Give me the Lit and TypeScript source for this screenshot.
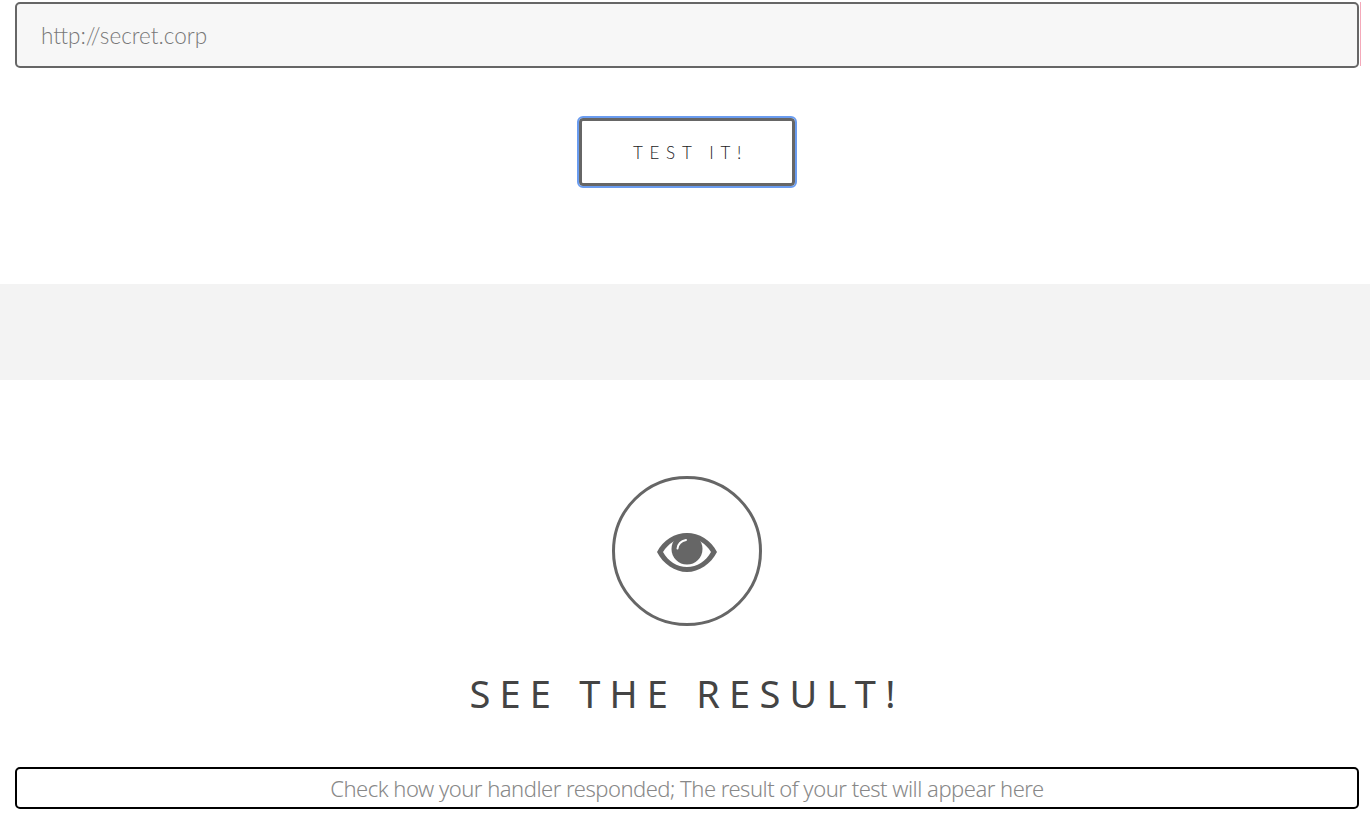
import { LitElement, html, css } from 'lit';
import { customElement } from 'lit/decorators.js';

@customElement('app-root')
class AppRoot extends LitElement {
  render() {
    return html`
      <div class="url-row">
        <input class="url" type="text" placeholder="http://secret.corp" />
        <div class="edge"></div>
      </div>

      <div class="actions">
        <button class="test">TEST IT!</button>
      </div>

      <div class="band"></div>

      <div class="result">
        <div class="circle">
          <svg width="60" height="39" viewBox="0 0 60 39">
            <path fill="#666" fill-rule="evenodd" d="M0 19C6 7 18 0 30 0S54 7 60 19C54 31 42 39 30 39S6 31 0 19zM6 19C11 28 20 34 30 34S49 28 54 19C49 11 41 5 30 5S11 11 6 19z"/>
            <circle cx="30" cy="16" r="15.500" fill="#666"/>
            <path fill="none" stroke="#fff" stroke-width="2" stroke-linecap="round" d="M20.500 15.500C21 11 24.500 8 29 7"/>
          </svg>
        </div>
        <h2>SEE THE RESULT!</h2>
      </div>

      <div class="output">Check how your handler responded; The result of your test will appear here</div>
    `;
  }

  static styles = css`
    :host {
      display: block;
      height: 829px;
      overflow: hidden;
      background: #fff;
      font-family: 'Noto Sans', 'Open Sans', sans-serif;
    }

    .url-row {
      display: flex;
      padding: 2px 9px 0 15px;
    }

    .url {
      flex: 1;
      box-sizing: border-box;
      height: 66px;
      min-width: 0;
      padding: 0 24px;
      border: 2px solid #666;
      border-radius: 5px;
      background: #f7f7f7;
      font-family: Lato, sans-serif;
      font-size: 22.500px;
      font-weight: 300;
      outline: none;
    }

    .url::placeholder {
      color: #777;
      opacity: 1;
    }

    .edge {
      width: 1px;
      height: 64px;
      margin-left: 1px;
      background: #f5a9ba;
    }

    .actions {
      display: flex;
      justify-content: center;
      padding: 50px 0 0 4px;
    }

    .test {
      box-sizing: border-box;
      width: 216px;
      height: 68px;
      padding: 0 0 0 7px;
      border: 3px solid #666;
      border-radius: 4px;
      background: #fff;
      color: #222;
      font-family: Lato, sans-serif;
      font-size: 17px;
      font-weight: 300;
      letter-spacing: 6.700px;
      outline: 2px solid #6a9cf0;
    }

    .band {
      height: 96px;
      margin-top: 98px;
      background: #f3f3f3;
    }

    .result {
      display: flex;
      flex-direction: column;
      align-items: center;
      padding: 96px 0 0 4px;
    }

    .circle {
      box-sizing: border-box;
      display: flex;
      align-items: center;
      justify-content: center;
      width: 150px;
      height: 150px;
      border: 3px solid #666;
      border-radius: 50%;
    }

    .circle svg {
      margin-top: 3px;
    }

    h2 {
      margin: 40px 0 0;
      color: #444;
      font-size: 38px;
      font-weight: 400;
      line-height: 54px;
      letter-spacing: 9.200px;
    }

    .output {
      box-sizing: border-box;
      height: 42px;
      margin: 47px 11px 0 15px;
      border: 2px solid #000;
      border-radius: 5px;
      color: #888;
      font-size: 22px;
      font-weight: 300;
      letter-spacing: -0.500px;
      line-height: 38px;
      text-align: center;
    }
  `;
}

declare global {
  interface HTMLElementTagNameMap {
    'app-root': AppRoot;
  }
}
